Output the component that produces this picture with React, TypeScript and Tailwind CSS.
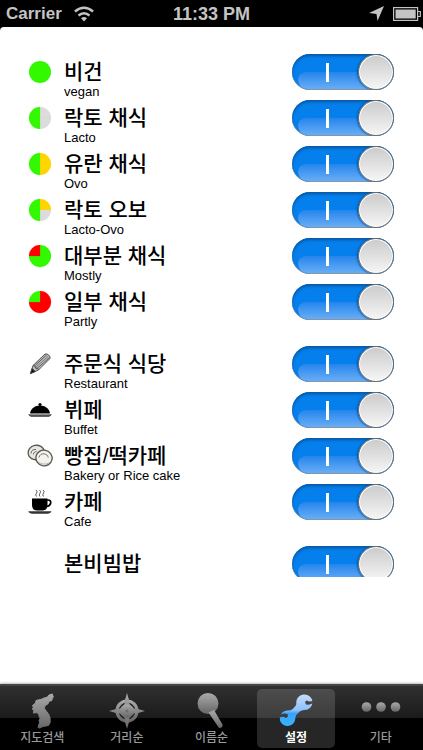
import type { ReactNode } from "react";
import clsx from "clsx";

const GREEN = "#33f900";
const YELLOW = "#ffd500";
const GREY = "#dcdcdc";
const RED = "#ff0000";

// quarters run clockwise from the top right
function Pie({ quarters }: { quarters: string[] }) {
  const paths = ["M12 12V1a11 11 0 0 1 11 11z", "M12 12h11a11 11 0 0 1-11 11z", "M12 12v11a11 11 0 0 1-11-11z", "M12 12H1a11 11 0 0 1 11-11z"];
  const solid = quarters.every((q) => q === quarters[0]);
  return (
    <svg viewBox="0 0 24 24" className="h-6 w-6">
      {solid ? (
        <circle cx="12" cy="12" r="11" fill={quarters[0]} />
      ) : (
        paths.map((d, i) => <path key={d} d={d} fill={quarters[i]} stroke={quarters[i]} strokeWidth="0.2" />)
      )}
    </svg>
  );
}

function PencilIcon() {
  return (
    <svg viewBox="0 0 24 24" className="h-6 w-6" fill="none" stroke="#444" strokeWidth="0.9">
      <path d="M2.500 21.500l2.500-8L17 2q2-.5 3.700 1t1.300 3.500L10.500 18z" fill="#bbb" />
      <path d="M6.500 14L18.500 3M8.500 17L21.500 5.500" stroke="#555" />
      <path d="M7.500 15.500L20 4.500" stroke="#777" />
      <path d="M5 13.500l2 .5.500 2 2.500.5.500 1.500" fill="#ddd" />
      <path d="M2.500 21.500l1.500-5 3.300 3z" fill="#111" />
    </svg>
  );
}

function BuffetIcon() {
  return (
    <svg viewBox="0 0 24 24" className="h-6 w-6">
      <circle cx="12" cy="6.500" r="1.600" />
      <path d="M2 15.500C2.500 10.500 7 7.500 12 7.500s9.500 3 10 8z" />
      <path d="M.3 16.200h23.400c-.5 1.500-2 2.600-4 2.600H4.300c-2 0-3.500-1.100-4-2.600z" fill="#333" />
      <path d="M2 16.800h20" stroke="#bbb" strokeWidth="0.800" />
    </svg>
  );
}

function BreadIcon() {
  return (
    <svg viewBox="0 0 24 24" className="h-6 w-6 overflow-visible" stroke="#5a5750" strokeWidth="1.300">
      <ellipse cx="8.200" cy="8.500" rx="8.200" ry="7.200" fill="#e9e7e2" transform="rotate(-12 8.200 8.500)" />
      <path d="M3 9.500c0-3 2.500-4.500 5-4M5.500 10.500c0-2 1.500-3 3-3" fill="none" strokeWidth="0.900" />
      <ellipse cx="16" cy="14" rx="8.200" ry="7.800" fill="#f4f2ed" transform="rotate(12 16 14)" />
      <path d="M11 13.500c.5-2.500 2.500-4 5-3.700s4 1.800 4.200 3.700" fill="none" strokeWidth="0.800" />
      <path d="M10.500 18c3 2.500 8 2.700 11 .5" fill="none" stroke="#aaa" strokeWidth="0.800" />
    </svg>
  );
}

function CupIcon() {
  return (
    <svg viewBox="0 0 24 24" className="h-6 w-6">
      <path
        d="M8 0q2 1.500.5 3.200T8.500 6.500M11.500 0q2 1.500.5 3.200T12 6.500M15 0q2 1.500.5 3.200T15.500 6.500"
        fill="none"
        stroke="#555"
        strokeWidth="1"
      />
      <path d="M4 8.500h15.500v6.500c0 4-2.500 5.500-5 5.500H9c-2.500 0-5-1.500-5-5.500z" />
      <path d="M18 10h2.200c3.700 0 3.400 5.500-1.200 6.500h-1.500" fill="none" stroke="#000" strokeWidth="1.700" />
      <path d="M.3 21.300h23.200c-.5 1.500-2 2.400-4 2.400H4.500c-2.300 0-3.700-.9-4.200-2.400z" fill="#333" />
    </svg>
  );
}

type Item = { label: string; sub?: string; icon?: ReactNode };

const groups: Item[][] = [
  [
    { label: "비건", sub: "vegan", icon: <Pie quarters={[GREEN, GREEN, GREEN, GREEN]} /> },
    { label: "락토 채식", sub: "Lacto", icon: <Pie quarters={[GREY, GREY, GREEN, GREEN]} /> },
    { label: "유란 채식", sub: "Ovo", icon: <Pie quarters={[YELLOW, YELLOW, GREEN, GREEN]} /> },
    { label: "락토 오보", sub: "Lacto-Ovo", icon: <Pie quarters={[YELLOW, GREY, GREEN, GREEN]} /> },
    { label: "대부분 채식", sub: "Mostly", icon: <Pie quarters={[GREEN, GREEN, GREEN, RED]} /> },
    { label: "일부 채식", sub: "Partly", icon: <Pie quarters={[RED, RED, RED, GREEN]} /> },
  ],
  [
    { label: "주문식 식당", sub: "Restaurant", icon: <PencilIcon /> },
    { label: "뷔페", sub: "Buffet", icon: <BuffetIcon /> },
    { label: "빵집/떡카페", sub: "Bakery or Rice cake", icon: <BreadIcon /> },
    { label: "카페", sub: "Cafe", icon: <CupIcon /> },
  ],
  [{ label: "본비빔밥" }],
];

function SettingRow({ label, sub, icon }: Item) {
  return (
    <label className="flex h-[46px] items-start">
      <span className="mt-[6px] h-6 w-6 shrink-0">{icon}</span>
      <span className="ml-3 flex-1">
        <span className="block text-[21px] leading-9 font-medium">{label}</span>
        {sub && <span className="-mt-[6px] block text-[13px] leading-4">{sub}</span>}
      </span>
      <span className="relative h-9 w-[102px] shrink-0">
        <input type="checkbox" role="switch" defaultChecked className="absolute inset-0 h-full w-full appearance-none rounded-full" />
        <span className="pointer-events-none flex h-9 items-center justify-end overflow-hidden rounded-full bg-[#057fec] shadow-[inset_0_2px_3px_#0a559f,inset_0_-1px_0_#8f9aa5]">
          <span className="absolute right-4 bottom-px left-[6px] h-[17px] rounded-t-[12px] rounded-bl-[14px] bg-linear-to-b from-[#2085ed] to-[#66adf6]" />
          <span className="relative mr-[29px] h-[19px] w-[3px] bg-white" />
          <span className="relative h-9 w-9 rounded-full border border-[#6e6e6e] bg-linear-to-b from-[#cbcbcb] to-[#f6f6f6] shadow-[inset_0_0_0_1px_#fff,-1px_0_2px_#0459a8]" />
        </span>
      </span>
    </label>
  );
}

function KoreaIcon() {
  return (
    <svg viewBox="0 0 36 36" className="h-9 w-9" fill="url(#tabGrey)" stroke="url(#tabGrey)" strokeLinejoin="round">
      <path d="M28.300 1l-3.300 1-1.500 2-4 1.200-2 1-5.500 1.300-.5 2.500-3 2.500.8 2-1 1.500 1.500 1.500-.5 2.500 4-.3 1.500 2 .5 2.300 1 1-1.300 2.500.5 2-1.500 5 1.500.5 3.500-1.500 5.500-1 1.700-3-.2-5-1.500-3.500-3-4-1-1.500.3-2.500 3.500-2.500.5-2 3-1 .5-2 1-1.500z" />
    </svg>
  );
}

function CompassIcon() {
  return (
    <svg viewBox="0 0 36 36" className="h-9 w-9">
      <circle cx="18" cy="18" r="10" fill="none" stroke="url(#tabGrey)" strokeWidth="3.200" />
      <path d="M18 0l2 7 .5 4 4.500 4.500 4 .5 7 2-7 2-4 .5-4.500 4.500-.5 4-2 7-2-7-.5-4-4.500-4.500-4-.5-7-2 7-2 4-.5 4.500-4.500.5-4z" fill="url(#tabGrey)" />
      <circle cx="18" cy="18" r="6.800" fill="url(#tabGrey)" />
      <path d="M16.500 18h3M18 16.500v3" stroke="#666" />
    </svg>
  );
}

function MagnifierIcon() {
  return (
    <svg viewBox="0 0 36 36" className="h-9 w-9">
      <circle cx="15" cy="10.500" r="10.500" fill="url(#tabGrey)" />
      <path d="M15.500 19.500l5.500-2.500 8.500 14.500q.5 3.500-3.500 3.500z" fill="url(#tabGrey)" />
    </svg>
  );
}

function WrenchIcon() {
  return (
    <svg viewBox="0 0 36 36" className="h-9 w-9">
      <mask id="wrenchJaws">
        <rect width="36" height="36" fill="#fff" />
        <path d="M36 8l-5 .5-2.500-1-1.500 1.500 1 2.500 2.500.3 5.500-1.800zM0 24.500l5.500-.8 2.500 1.200 2-1.500-.5-2.500-3-.5L0 22z" fill="#000" />
      </mask>
      <g mask="url(#wrenchJaws)" fill="url(#tabBlue)">
        <path d="M25.500 1.500a7.800 7.800 0 1 1 .8 15.500q-2.500.3-4.500 1.500l-3.500 3.500q-1 2-1 4a7.800 7.800 0 1 1-7-8.500q2.500 0 4.500-1.500l3-3.500q.8-2 .5-4 1-6 7.200-7z" />
      </g>
    </svg>
  );
}

function MoreIcon() {
  return (
    <svg viewBox="0 0 40 36" className="h-9 w-10">
      {[5.5, 20, 34.5].map((x) => (
        <circle key={x} cx={x} cy="14" r="4.800" fill="url(#tabGrey)" />
      ))}
    </svg>
  );
}

const tabs = [
  { label: "지도검색", icon: <KoreaIcon /> },
  { label: "거리순", icon: <CompassIcon /> },
  { label: "이름순", icon: <MagnifierIcon /> },
  { label: "설정", icon: <WrenchIcon />, active: true },
  { label: "기타", icon: <MoreIcon /> },
];

function StatusBar() {
  return (
    <header className="grid h-[27px] shrink-0 grid-cols-3 items-center bg-black px-[6px] font-bold text-[#c4c4c4]">
      <div className="flex items-center gap-3">
        <span className="text-[17px] leading-[26px]">Carrier</span>
        <svg viewBox="0 0 20 16" className="h-4 w-5" fill="none" stroke="currentColor" strokeWidth="2.600">
          <path d="M1 5.500q9-7.500 18 0M4.500 9.500q5.500-4.500 11 0" />
          <path d="M7 12.200q3-2.500 6 0L10 15.500z" fill="currentColor" stroke="none" />
        </svg>
      </div>
      <span className="text-center text-[18px] leading-[26px] whitespace-nowrap">11:33 PM</span>
      <div className="flex items-center justify-end gap-[9px]">
        <svg viewBox="0 0 15 15" className="h-[15px] w-[15px]" fill="currentColor">
          <path d="M15 0L8.500 15 7.500 8 0 7z" />
        </svg>
        <svg viewBox="0 0 28 14" className="-mr-1 h-[14px] w-7" fill="none" stroke="currentColor" strokeWidth="1.200">
          <rect x="0.600" y="0.600" width="24" height="12.800" />
          <rect x="2.500" y="2.500" width="20.200" height="9" fill="currentColor" stroke="none" />
          <path d="M25 4.500h2.300v5H25" />
        </svg>
      </div>
    </header>
  );
}

export default function App() {
  return (
    <div className="flex h-screen flex-col bg-black font-['Liberation_Sans','Noto_Sans_CJK_KR',sans-serif] text-black">
      <StatusBar />
      <div className="flex min-h-0 flex-1 flex-col rounded-t-[4px] bg-white pb-[107px]">
        <main className="flex min-h-0 flex-1 flex-col gap-4 overflow-hidden pt-[27px] pr-[29px] pl-7">
          {groups.map((items, i) => (
            <section key={i} className="shrink-0">
              {items.map((item) => (
                <SettingRow key={item.label} {...item} />
              ))}
            </section>
          ))}
        </main>
      </div>
      <nav className="grid h-[66px] shrink-0 grid-cols-5 border-t-2 border-t-[#444] bg-linear-to-b from-[#303030] from-0% via-[#1b1b1b] via-50% to-black to-50% shadow-[0_-1px_2px_#bbb]">
        {tabs.map(({ label, icon, active }) => (
          <button
            key={label}
            type="button"
            aria-current={active ? "page" : undefined}
            className={clsx(
              "mx-[3px] mt-[3px] mb-[2px] flex flex-col items-center rounded-[5px] pt-1 text-[12px] leading-[19px]",
              active ? "bg-white/15 font-bold text-white" : "font-medium text-[#999]",
            )}
          >
            {icon}
            <span>{label}</span>
          </button>
        ))}
      </nav>
      <svg className="absolute h-0 w-0" aria-hidden="true">
        <defs>
          <linearGradient id="tabGrey" x1="0" y1="0" x2="0" y2="1">
            <stop offset="0" stopColor="#aaa" />
            <stop offset="1" stopColor="#666" />
          </linearGradient>
          <linearGradient id="tabBlue" x1="0" y1="0" x2="0" y2="1">
            <stop offset="0" stopColor="#c5dcfa" />
            <stop offset="0.500" stopColor="#8fc0fa" />
            <stop offset="0.600" stopColor="#3ba2fb" />
            <stop offset="1" stopColor="#35b4ff" />
          </linearGradient>
        </defs>
      </svg>
    </div>
  );
}
